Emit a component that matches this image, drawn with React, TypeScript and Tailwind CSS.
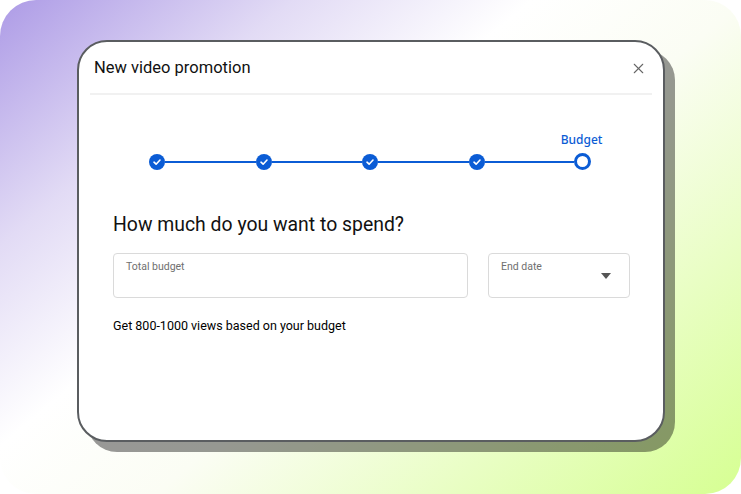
import { X } from 'lucide-react'

const steps = [true, true, true, true, false]

function StepDot({ done }: { done: boolean }) {
  if (!done) {
    return <div className="w-[17px] h-[17px] rounded-full border-[3px] border-[#0b5cd5] bg-white shrink-0" />
  }
  return (
    <div className="w-4 h-4 rounded-full bg-[#0b5cd5] flex items-center justify-center shrink-0">
      <svg width="10" height="10" viewBox="0 0 10 10" fill="none">
        <path d="M2 5.2 L4.1 7.2 L8 3" stroke="white" strokeWidth="1.6" strokeLinecap="round" strokeLinejoin="round" />
      </svg>
    </div>
  )
}

export default function App() {
  return (
    <div className="w-[741px] h-[494px] bg-white font-['Roboto',sans-serif]">
      <div className="w-full h-full rounded-[36px] bg-[linear-gradient(140deg,#ad9be6_0%,#e2dbf5_22%,#ffffff_40%,#fbfdf4_56%,#d6ff92_100%)] pl-[77px] pt-[40px]">
        <div className="w-[588px] h-[402px] bg-white rounded-[30px] border-2 border-[#5a5d60] shadow-[10px_10px_0_rgba(0,0,0,0.4)] flex flex-col">
          <div className="flex items-center justify-between h-[51px] pl-[15px] pr-[16px] pt-[2px]">
            <h1 className="text-[16.5px] text-[#111]">New video promotion</h1>
            <X className="w-[17px] h-[17px] text-[#666]" strokeWidth={1.5} />
          </div>
          <div className="mx-[11px] h-[2px] bg-[#f1f1f1]" />

          <div className="pt-[37px] pl-[70px] pr-[72px]">
            <div className="flex justify-end">
              <div className="w-[19px] flex justify-center">
                <span className="whitespace-nowrap text-[12px] font-medium text-[#0b5cd5] leading-4 font-['Noto_Sans',sans-serif]">Budget</span>
              </div>
            </div>
            <div className="flex items-center mt-[5px]">
              {steps.map((done, i) => (
                <div key={i} className={i === 0 ? 'flex items-center' : 'flex items-center flex-1'}>
                  {i > 0 && <div className="flex-1 h-[2px] bg-[#0b5cd5]" />}
                  <StepDot done={done} />
                </div>
              ))}
            </div>
          </div>

          <div className="pl-[34px] pr-[33px]">
            <h2 className="mt-[41px] text-[19.4px] leading-7 text-[#111]">How much do you want to spend?</h2>
            <div className="flex gap-[20px] mt-[14px]">
              <div className="w-[355px] h-[45px] border border-[#dadada] rounded-[4px] px-[12px] pt-[5px]">
                <span className="block text-[10.5px] leading-4 text-[#6f6f6f]">Total budget</span>
              </div>
              <div className="w-[142px] h-[45px] border border-[#dadada] rounded-[4px] pl-[12px] pr-[18px] pt-[5px] flex justify-between">
                <span className="block text-[10.5px] leading-4 text-[#6f6f6f]">End date</span>
                <svg width="10" height="6" viewBox="0 0 10 6" className="mt-[14px]">
                  <path d="M0 0 L10 0 L5 6 Z" fill="#555" />
                </svg>
              </div>
            </div>
            <p className="mt-[19px] text-[12.5px] text-black leading-[18px]">Get 800-1000 views based on your budget</p>
          </div>
        </div>
      </div>
    </div>
  )
}
